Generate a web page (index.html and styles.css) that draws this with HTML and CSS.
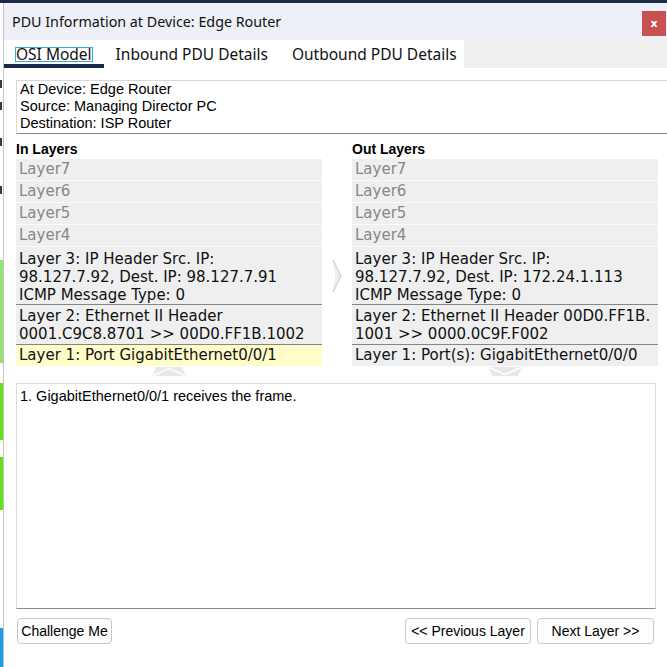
FILE: index.html
```html
<!DOCTYPE html>
<html>
<head>
<meta charset="utf-8">
<link rel="stylesheet" href="styles.css">
</head>
<body>
<div class="topline"></div>
<div class="screen">
  <div class="strip">
    <div class="seg seg-a"></div>
    <div class="seg seg-mark"></div>
    <div class="seg seg-b"></div>
    <div class="seg seg-mark"></div>
    <div class="seg seg-c"></div>
    <div class="seg seg-mark"></div>
    <div class="seg seg-d"></div>
    <div class="seg seg-mark"></div>
    <div class="seg seg-e"></div>
    <div class="seg seg-lightgreen"></div>
    <div class="seg seg-white20"></div>
    <div class="seg seg-green57"></div>
    <div class="seg seg-white17"></div>
    <div class="seg seg-green53"></div>
    <div class="seg seg-white118"></div>
    <div class="seg seg-blue"></div>
  </div>
  <div class="window">
    <div class="titlebar">
      <span class="title">PDU Information at Device: Edge Router</span>
      <button class="close">x</button>
    </div>
    <div class="tabbar">
      <div class="tabs">
        <div class="tab tab-active"><span class="focus">OSI Model</span></div>
        <div class="tab">Inbound PDU Details</div>
        <div class="tab">Outbound PDU Details</div>
      </div>
    </div>
    <div class="content">
      <div class="info">
        <div>At Device: Edge Router</div>
        <div>Source: Managing Director PC</div>
        <div>Destination: ISP Router</div>
      </div>
      <div class="layers">
        <div class="col">
          <div class="col-head">In Layers</div>
          <div class="stack">
            <div class="row dim">Layer7</div>
            <div class="row dim">Layer6</div>
            <div class="row dim">Layer5</div>
            <div class="row dim">Layer4</div>
            <div class="row l3">Layer 3: IP Header Src. IP:<br>98.127.7.92, Dest. IP: 98.127.7.91<br>ICMP Message Type: 0</div>
            <div class="row l2">Layer 2: Ethernet II Header<br>0001.C9C8.8701 &gt;&gt; 00D0.FF1B.1002</div>
            <div class="row l1 current">Layer 1: Port GigabitEthernet0/0/1</div>
          </div>
          <div class="nav-arrow">
            <svg width="34" height="9" viewBox="0 0 34 9"><polygon points="4,0 30,0 34,9 0,9" fill="#e8e8e8"/><polyline points="1,8.5 17,1.5 33,8.5" fill="none" stroke="#ffffff" stroke-width="1.5"/></svg>
          </div>
        </div>
        <div class="mid">
          <svg width="10" height="34" viewBox="0 0 10 34"><polygon points="1,1 9,17 1,33 3,17" fill="#efefef"/><polyline points="1,1 9,17 1,33" fill="none" stroke="#d8d8d8" stroke-width="1.5"/></svg>
        </div>
        <div class="col">
          <div class="col-head">Out Layers</div>
          <div class="stack">
            <div class="row dim">Layer7</div>
            <div class="row dim">Layer6</div>
            <div class="row dim">Layer5</div>
            <div class="row dim">Layer4</div>
            <div class="row l3">Layer 3: IP Header Src. IP:<br>98.127.7.92, Dest. IP: 172.24.1.113<br>ICMP Message Type: 0</div>
            <div class="row l2">Layer 2: Ethernet II Header 00D0.FF1B.<br>1001 &gt;&gt; 0000.0C9F.F002</div>
            <div class="row l1">Layer 1: Port(s): GigabitEthernet0/0/0</div>
          </div>
          <div class="nav-arrow">
            <svg width="34" height="9" viewBox="0 0 34 9"><polygon points="0,0 34,0 30,9 4,9" fill="#e8e8e8"/><polyline points="1,0.5 17,7.5 33,0.5" fill="none" stroke="#ffffff" stroke-width="1.5"/></svg>
          </div>
        </div>
      </div>
      <div class="msg">1. GigabitEthernet0/0/1 receives the frame.</div>
      <div class="buttons">
        <button class="btn btn-challenge">Challenge Me</button>
        <button class="btn btn-prev">&lt;&lt; Previous Layer</button>
        <button class="btn btn-next">Next Layer &gt;&gt;</button>
      </div>
    </div>
  </div>
</div>
</body>
</html>
```

FILE: styles.css
```css
html, body {
  margin: 0;
  padding: 0;
}
body {
  width: 667px;
  height: 667px;
  overflow: hidden;
  background: #ffffff;
  font-family: "Liberation Sans", Arial, sans-serif;
}
.topline {
  height: 3px;
  background: #1b2a47;
}
.screen {
  display: flex;
  height: 664px;
}

/* background desktop strip at the far left */
.strip {
  width: 3px;
  display: flex;
  flex-direction: column;
  background: #ffffff;
}
.seg { width: 3px; flex: none; }
.seg-a { height: 77px; }
.seg-mark { height: 8px; background: #3a3a3a; width: 2px; }
.seg-b { height: 14px; }
.seg-c { height: 28px; }
.seg-d { height: 40px; }
.seg-e { height: 66px; }
.seg-lightgreen { height: 103px; background: #93e46c; }
.seg-white20 { height: 20px; }
.seg-green57 { height: 57px; background: #5ee312; }
.seg-white17 { height: 17px; }
.seg-green53 { height: 53px; background: #5ee312; }
.seg-white118 { height: 118px; }
.seg-blue { flex: 1; background: #1c9ce6; }

/* dialog window */
.window {
  flex: 1;
  min-width: 0;
  display: flex;
  flex-direction: column;
  border-left: 1px solid #c4c4c4;
  background: #ffffff;
}
.titlebar {
  height: 37px;
  flex: none;
  display: flex;
  align-items: flex-start;
  background: #eef0f7;
  padding-left: 8px;
}
.title {
  font-family: "Noto Sans", sans-serif;
  font-size: 14.3px;
  line-height: 21px;
  padding-top: 8px;
  color: #111;
}
.close {
  margin-left: auto;
  margin-top: 8px;
  margin-right: 1px;
  width: 24px;
  height: 25px;
  border: none;
  padding: 0;
  background: #c75050;
  color: #ffffff;
  font-family: "DejaVu Sans", sans-serif;
  font-weight: bold;
  font-size: 11px;
  line-height: 25px;
}

.tabbar {
  height: 28px;
  flex: none;
  display: flex;
  background: #f0f0f0;
}
.tabs {
  display: flex;
  align-items: flex-start;
  background: #ffffff;
  width: 460px;
  height: 28px;
}
.tab {
  font-family: "Noto Sans", sans-serif;
  font-size: 15.5px;
  line-height: 20px;
  padding: 4px 12px 0 12px;
  border-bottom: 4px solid transparent;
  color: #111;
  white-space: nowrap;
}
.tab-active {
  padding-left: 11px;
  padding-right: 11px;
  border-bottom-color: #17284a;
}
.focus {
  display: inline-block;
  line-height: 13px;
  border: 1px solid #36a9d9;
}

/* main content */
.content {
  flex: 1;
  display: flex;
  flex-direction: column;
  padding-left: 12px;
  background: #ffffff;
}
.info {
  margin-top: 12px;
  height: 52px;
  border: 1px solid #d8d8d8;
  border-right: none;
  border-bottom-color: #8a8a8a;
  padding-left: 3px;
  font-size: 14.5px;
  line-height: 17px;
  color: #000;
}

.layers {
  margin-top: 7px;
  display: grid;
  grid-template-columns: 306px 30px 306px;
}
.col-head {
  font-weight: bold;
  font-size: 14px;
  line-height: 16px;
  margin-bottom: 2px;
  color: #000;
}
.stack {
  display: flex;
  flex-direction: column;
}
.row {
  font-family: "DejaVu Sans", sans-serif;
  font-size: 15px;
  background: #efefef;
  padding-left: 3px;
  white-space: nowrap;
  color: #111;
}
.dim {
  color: #878787;
  height: 21px;
  line-height: 21px;
  border-bottom: 1px solid #fafafa;
}
.l3 {
  height: 54px;
  padding-top: 3px;
  line-height: 18px;
}
.l2 {
  border-top: 1px solid #858585;
  padding-top: 2px;
  padding-bottom: 1px;
  line-height: 18px;
  height: 36px;
}
.l1 {
  border-top: 1px solid #858585;
  height: 21px;
  line-height: 21px;
}
.current {
  background: #fffcc9;
}
.nav-arrow {
  display: flex;
  justify-content: center;
  margin-top: 1px;
  height: 9px;
}
.nav-arrow svg { display: block; }
.mid {
  display: flex;
  justify-content: center;
  align-items: flex-start;
  padding-top: 118px;
}
.mid svg { display: block; }

.msg {
  margin-top: 7px;
  width: 640px;
  height: 226px;
  box-sizing: border-box;
  border: 1px solid #dcdcdc;
  border-bottom-color: #8a8a8a;
  padding: 4px 3px;
  font-size: 14.5px;
  line-height: 17px;
  color: #000;
}

.buttons {
  margin-top: 9px;
  display: flex;
  padding-right: 13px;
  gap: 6px;
}
.btn {
  height: 26px;
  box-sizing: border-box;
  border: 1px solid #c8c8c8;
  border-radius: 4px;
  background: #fdfdfd;
  font-family: "Liberation Sans", Arial, sans-serif;
  font-size: 14px;
  color: #000;
  padding: 0;
  white-space: nowrap;
}
.btn-challenge {
  width: 95px;
  margin-left: 1px;
}
.btn-prev {
  margin-left: auto;
  width: 126px;
}
.btn-next {
  width: 117px;
}
```
